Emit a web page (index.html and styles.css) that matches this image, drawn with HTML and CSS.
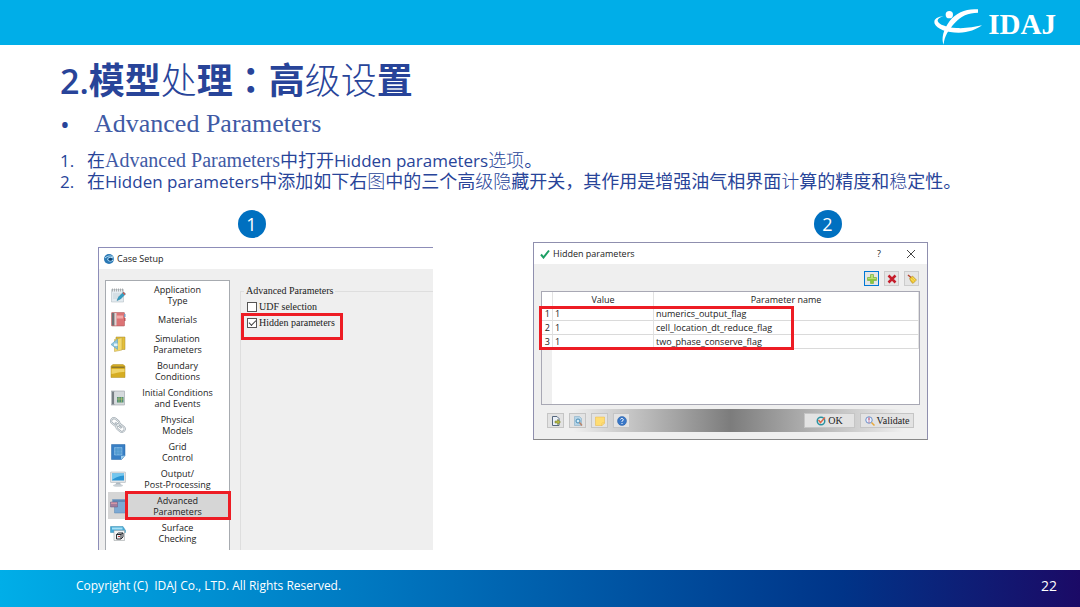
FILE: index.html
```html
<!DOCTYPE html>
<html lang="zh-CN">
<head>
<meta charset="utf-8">
<meta name="viewport" content="width=device-width, initial-scale=1">
<title>2.模型处理：高级设置</title>
<link rel="stylesheet" href="styles.css">
</head>
<body class="slide">
<header class="topbar">
  <svg class="logo-mark" viewBox="99 24 144 111" aria-hidden="true"><g fill="#fff"><circle cx="145" cy="44" r="11"/><path d="M128 49C106 50 97 60 101 71C107 86 137 98 173 98C203 98 227 88 243 76C220 81 192 86 166 84C137 82 113 74 110 63C109 57 116 52 128 49Z"/><path d="M128 134C120 117 127 88 146 63C166 37 196 25 231 28L231 38C201 38 180 48 162 68C143 89 130 107 128 134Z"/></g></svg>
  <span class="logo-text">IDAJ</span>
</header>
<main class="content">
  <h1 class="title"><span class="title-num">2.</span>模型<span class="thin">处</span>理<span class="colon" lang="zh-TW">：</span>高<span class="thin">级设</span>置</h1>
  <p class="subtitle"><span class="dot">•</span><span class="song">Advanced Parameters</span></p>
  <ol class="steps">
    <li class="step"><span class="num">1.</span><span>在<span class="song">Advanced Parameters</span>中打开<span class="latin">Hidden parameters</span><span class="thin">选项</span>。</span></li>
    <li class="step"><span class="num">2.</span><span>在<span class="latin">Hidden parameters</span>中添加如下右<span class="thin">图</span>中的三个高<span class="thin">级隐</span>藏开关，其作用是增强油气相界面<span class="thin">计</span>算的精度和<span class="thin">稳</span>定性。</span></li>
  </ol>
  <div class="figures">
    <section class="figure figure-one">
      <span class="badge">1</span>
      <div class="setup">
        <div class="setup-title"><svg width="10" height="10" viewBox="0 0 20 20" aria-hidden="true"><circle cx="10" cy="10" r="10" fill="#2a78b5"/><path d="M2 8C8 3 14 3 18 6M19 8C11 5 7 8 7 11C8 15 14 15 19 12" fill="none" stroke="#b8e0f4" stroke-width="2"/><circle cx="13" cy="10.500" r="3" fill="#123e69"/></svg>Case Setup</div>
        <div class="setup-body">
          <nav class="menu">
            <button class="item"><svg viewBox="0 0 32 32"><path d="M3 5H27V30H3Z" fill="#e4ebf0" stroke="#a9b4bd"/><path d="M5 3V9M9 3V9M13 3V9M17 3V9M21 3V9M25 3V9" stroke="#999" stroke-width="1.500"/><path d="M6 14H22M6 18H18M6 22H14" stroke="#a8bac6"/><path d="M14 27L17 20L27 10L31 14L21 24Z" fill="#329fc5" stroke="#277b99"/><path d="M27 10L31 14L29 16L25 12Z" fill="#d6574b"/></svg><span>Application<br>Type</span></button>
            <button class="item short"><svg viewBox="0 0 32 32"><rect x="3" y="3" width="26" height="27" rx="1" fill="#dc7375" stroke="#a65254"/><path d="M4 4H9V29H4Z" fill="#707174"/><path d="M9 4H13V29H9Z" fill="#d8d8d8"/><path d="M13 9H26V15H13Z" fill="#f4aaa8"/><path d="M28 6H31V12H28Z" fill="#779bc0"/><path d="M28 14H31V20H28Z" fill="#bd565b"/></svg><span>Materials</span></button>
            <button class="item"><svg viewBox="0 0 32 32"><path d="M12 2H30V27H12Z" fill="#e4bf39" stroke="#a58a2c"/><path d="M9 7L24 3V28L9 31Z" fill="#f4d96c" stroke="#b69a38"/><path d="M15 6V27L2 17Z" fill="#8ec4dd" stroke="#4d99bd"/><path d="M8 15H15V20H8Z" fill="#e4f4f8"/></svg><span>Simulation<br>Parameters</span></button>
            <button class="item"><svg viewBox="0 0 32 32"><path d="M2 6L6 3H26L30 6V29H2Z" fill="#d6ad22" stroke="#ae8f25"/><path d="M3 7H29V10H3Z" fill="#8f792d"/><path d="M3 12H29V18C20 17 12 20 3 22Z" fill="#f0d467"/></svg><span>Boundary<br>Conditions</span></button>
            <button class="item"><svg viewBox="0 0 32 32"><rect x="3" y="2" width="26" height="28" fill="#d6dadd" stroke="#8b9197"/><path d="M4 3H9V29H4Z" fill="#777e84"/><path d="M9 4V28" stroke="#fff"/><rect x="14" y="14" width="13" height="11" fill="#518f76"/><path d="M14 18H27M18 14V25M23 14V25" stroke="#d4d16d"/></svg><span>Initial Conditions<br>and Events</span></button>
            <button class="item"><svg viewBox="0 0 32 32"><g fill="none" stroke="#929da6" stroke-width="4"><rect x="2" y="5" width="17" height="11" rx="5" transform="rotate(40 11 10)"/><rect x="13" y="17" width="17" height="11" rx="5" transform="rotate(40 22 22)"/><path d="M10 11L23 22"/></g><g fill="none" stroke="#e2e7e9" stroke-width="2"><rect x="2" y="5" width="17" height="11" rx="5" transform="rotate(40 11 10)"/><rect x="13" y="17" width="17" height="11" rx="5" transform="rotate(40 22 22)"/><path d="M10 11L23 22"/></g></svg><span>Physical<br>Models</span></button>
            <button class="item"><svg viewBox="0 0 32 32"><path d="M3 1H30V23L23 31H3Z" fill="#387fc5" stroke="#2365a5"/><path d="M9 7H24V22H9Z" fill="#5fa3d8" stroke="#a3cfec"/><path d="M13 7V22M20 7V22M9 12H24M9 18H24" stroke="#4b94cb"/><path d="M30 23L22 31V24Z" fill="#9ed0ed"/></svg><span>Grid<br>Control</span></button>
            <button class="item"><svg viewBox="0 0 32 32"><rect x="1" y="2" width="30" height="21" rx="1" fill="#e2e5e7" stroke="#a5adb3"/><path d="M4 5H28V19H4Z" fill="#2b95d4"/><path d="M4 5H28V9C17 10 12 13 4 18Z" fill="#73c7ef"/><path d="M13 23H20L22 28H10Z" fill="#aeb9c1"/><ellipse cx="16" cy="29" rx="10" ry="2.500" fill="#c9d0d5"/></svg><span>Output/<br>Post-Processing</span></button>
            <button class="item selected"><svg viewBox="0 0 32 32"><path d="M5 3H32V30H9V14H5Z" fill="#7ca9d4" stroke="#5b87b0"/><path d="M6 4H31V8H6Z" fill="#5f8ab8"/><path d="M1 8H15V18H1Z" fill="#a37c9c" stroke="#665b82"/><path d="M2 9H14V12H2Z" fill="#d297a7"/></svg><span>Advanced<br>Parameters</span></button>
            <button class="item"><svg viewBox="0 0 32 32"><path d="M1 3H26L31 11V15H1Z" fill="#45a9d7" stroke="#388dad"/><path d="M4 5H25V9H4Z" fill="#a9e1f5"/><path d="M8 11H29V31H8Z" fill="#f3f3f3" stroke="#919699"/><path d="M13 19L17 16H26V24L22 28H13Z" fill="#eee" stroke="#292d32" stroke-width="2"/><path d="M13 19H22V28M22 19L26 16" stroke="#292d32" fill="none" stroke-width="2"/><path d="M16 23H20" stroke="#bb3838" stroke-width="2"/></svg><span>Surface<br>Checking</span></button>
          </nav>
          <fieldset class="options">
            <legend>Advanced Parameters</legend>
            <label class="option"><input type="checkbox">UDF selection</label>
            <label class="option marked"><input type="checkbox" checked>Hidden parameters</label>
          </fieldset>
        </div>
      </div>
    </section>
    <section class="figure figure-two">
      <span class="badge">2</span>
      <div class="dialog">
        <div class="dialog-title"><svg width="10" height="10" viewBox="0 0 20 20" aria-hidden="true"><path d="M2 11L7 17L18 3" fill="none" stroke="#1c9f64" stroke-width="4"/></svg><span class="dialog-name">Hidden parameters</span><button class="window-button" aria-label="Help">?</button><button class="window-button" aria-label="Close"><svg width="8" height="8" viewBox="0 0 8 8"><path d="M0 0L8 8M8 0L0 8" stroke="#444"/></svg></button></div>
        <div class="tools">
          <button class="tool active" aria-label="Add"><svg viewBox="0 0 20 20"><path d="M7 1H13V7H19V13H13V19H7V13H1V7H7Z" fill="#8cc83d" stroke="#65a52b"/><path d="M8 2H12V8H18V10H2V8H8Z" fill="#b9df73"/></svg></button>
          <button class="tool" aria-label="Delete"><svg viewBox="0 0 20 20"><path d="M3 3L17 17M17 3L3 17" stroke="#c51d2b" stroke-width="5"/></svg></button>
          <button class="tool" aria-label="Clear"><svg viewBox="0 0 20 20"><path d="M2 2L9 8" stroke="#b6452f" stroke-width="3"/><path d="M5 9L11 4L19 12L12 19Q7 16 5 9Z" fill="#efc62f" stroke="#a58026"/><path d="M8 10L14 15M11 7L17 13" stroke="#fff09a"/></svg></button>
        </div>
        <div class="table-box">
          <table class="params">
            <thead><tr><th class="index"></th><th class="value">Value</th><th>Parameter name</th></tr></thead>
            <tbody>
              <tr><td class="index">1</td><td>1</td><td>numerics_output_flag</td></tr>
              <tr><td class="index">2</td><td>1</td><td>cell_location_dt_reduce_flag</td></tr>
              <tr><td class="index">3</td><td>1</td><td>two_phase_conserve_flag</td></tr>
            </tbody>
          </table>
        </div>
        <div class="actions">
          <button class="action" aria-label="Export"><svg viewBox="0 0 20 20"><path d="M3 1H12L16 5V19H3Z" fill="#eaf0f8" stroke="#55677d" stroke-width="2"/><path d="M8 10H13V7L19 12L13 17V14H8Z" fill="#b6b942" stroke="#6b752d"/></svg></button>
          <button class="action" aria-label="Preview"><svg viewBox="0 0 20 20"><path d="M3 1H13L17 5V19H3Z" fill="#b7d4e6" stroke="#7ba7c3"/><circle cx="10" cy="10" r="4" fill="#d5edf8" stroke="#468cb7" stroke-width="2"/><path d="M13 13L18 19" stroke="#ba8469" stroke-width="3"/></svg></button>
          <button class="action" aria-label="Note"><svg viewBox="0 0 20 20"><path d="M1 2H19V14L14 19H1Z" fill="#ffdd73" stroke="#e8b744"/><path d="M19 14H14V19Z" fill="#fff0a8" stroke="#e8b744"/></svg></button>
          <button class="action" aria-label="Help"><svg viewBox="0 0 20 20"><circle cx="10" cy="10" r="9" fill="#3977c7" stroke="#285fa5"/><path d="M7 7Q8 4 11 5Q15 7 10 11V12M10 14V16" fill="none" stroke="#fff" stroke-width="2"/></svg></button>
          <button class="action ok"><svg viewBox="0 0 20 20"><circle cx="10" cy="10" r="7.500" fill="#e7f1ee" stroke="#2a91a0" stroke-width="3"/><path d="M5 8L9 13L18 3" fill="none" stroke="#dd6548" stroke-width="3"/></svg>OK</button>
          <button class="action validate"><svg viewBox="0 0 20 20"><circle cx="8" cy="8" r="6.500" fill="#eaf1ff" stroke="#6d91c9" stroke-width="2"/><path d="M8 3V9M8 11V13" stroke="#b92e4b" stroke-width="2"/><path d="M13 13L19 19" stroke="#e6a83b" stroke-width="3"/></svg>Validate</button>
        </div>
      </div>
    </section>
  </div>
</main>
<footer class="footer"><span>Copyright (C)&nbsp; IDAJ Co., LTD. All Rights Reserved.</span><span class="page">22</span></footer>
</body>
</html>
```

FILE: styles.css
```css
*, *::before, *::after { box-sizing: border-box; }
button { font: inherit; color: inherit; padding: 0; border: 0; background: none; }
svg { display: block; flex: none; }
.slide { margin: 0; min-height: 100vh; display: flex; flex-direction: column; background: #fff; color: #284499; font-family: "Open Sans", "Noto Sans CJK SC", sans-serif; }
.topbar { height: 45px; flex: none; display: flex; justify-content: flex-end; align-items: flex-end; gap: 6px; padding-right: 24px; background: #00aee8; }
.logo-mark { width: 48px; height: 37px; }
.logo-text { font: bold 29px/32px "Liberation Serif", serif; color: #fff; padding-bottom: 5px; }
.content { flex: 1; }
.title { margin: 0; padding: 9px 60px 0; font-size: 36px; line-height: 48px; font-weight: 700; font-family: "Noto Sans CJK SC", sans-serif; }
.title-num { font-family: "Open Sans", sans-serif; font-size: 34px; font-weight: 600; }
.colon { font-family: "Noto Sans CJK TC", sans-serif; }
.thin { font-weight: 300; }
.song { font-family: "Liberation Serif", serif; color: #405aa5; }
.subtitle { margin: 0; padding: 0 60px; display: flex; font-size: 26px; line-height: 38px; }
.dot { width: 34px; }
.steps { list-style: none; margin: 0; padding: 7px 60px 0; font-size: 18px; line-height: 21px; }
.step { display: flex; }
.step .song { font-size: 20px; line-height: 20px; }
.num { width: 27px; flex: none; font-size: 17px; }
.latin { font-size: 17px; }
.figures { display: grid; grid-template-columns: 335fr 395fr; column-gap: 100px; align-items: start; padding: 18px 152px 0 98px; }
.figure { display: flex; flex-direction: column; align-items: center; gap: 4px; }
.figure-one { gap: 9px; }
.figure-one .badge { margin-right: 28px; }
.figure-two .badge { margin-left: 194px; }
.badge { width: 28px; height: 28px; border-radius: 50%; background: #0070c0; color: #fff; font-size: 18px; line-height: 28px; text-align: center; }
.setup, .dialog { width: 100%; color: #222; font-family: "Open Sans", sans-serif; font-size: 9px; background: #efefef; }
.setup { border-top: 1px solid #8d8db8; border-left: 1px solid #8d8db8; }
.setup-title { height: 21px; display: flex; align-items: center; gap: 3px; padding-left: 5px; background: #fff; }
.setup-body { display: flex; gap: 10px; padding: 11px 0 0 6px; }
.menu { width: 125px; flex: none; border: 1px solid #a7abb0; border-bottom: 0; background: #fff; padding: 0 0 4px 2px; }
.item { width: 100%; height: 27px; display: flex; align-items: center; line-height: 11px; text-align: center; position: relative; }
.item svg { width: 16px; height: 18px; margin-left: 2px; }
.item span { flex: 1; }
.item.short { height: 22px; }
.item.selected { background: #d6d6d6; }
.item.selected::after { content: ""; position: absolute; inset: -1px -2px -1px 17px; border: 3px solid #ed1c24; }
.options { flex: 1; min-width: 0; margin: 4px 0 0; padding: 1px 0 0 6px; border: 1px solid #dedede; border-right: 0; border-bottom: 0; font: 10px/14px "Liberation Serif", serif; }
.options legend { padding: 0 2px; margin-left: -3px; line-height: 14px; }
.option { width: 96px; height: 16px; display: flex; align-items: center; gap: 2px; position: relative; }
.option input { appearance: none; width: 10px; height: 10px; margin: 0; border: 1px solid #555; background: #fff; flex: none; }
.option.marked::before { content: ""; position: absolute; left: 2px; top: 5px; width: 7px; height: 4px; border-left: 1px solid #444; border-bottom: 1px solid #444; transform: rotate(-45deg); z-index: 1; }
.option.marked::after { content: ""; position: absolute; left: -6px; top: -2px; right: 0; height: 27px; border: 3px solid #ed1c24; }
.dialog { border: 1px solid #8f8fae; border-bottom-color: #888; }
.dialog-title { height: 21px; display: flex; align-items: center; background: #fff; padding: 0 6px; gap: 3px; }
.dialog-name { flex: 1; }
.window-button { width: 20px; height: 20px; display: grid; place-items: center; margin-left: 9px; }
.tools { display: flex; justify-content: flex-end; gap: 5px; padding: 7px 8px 5px; }
.tool { width: 15px; height: 15px; border: 1px solid #ccc; background: #e5e5e5; display: grid; place-items: center; }
.tool.active { border-color: #0078d7; }
.tool svg { width: 10px; height: 10px; }
.table-box { position: relative; height: 114px; margin: 0 7px; border: 1px solid #a8a8b4; background: linear-gradient(90deg, #efefef 10px, #fff 10px); }
.table-box::after { content: ""; position: absolute; left: -3px; top: 14px; width: 255px; height: 44px; border: 3px solid #ed1c24; }
.params { width: 100%; border-collapse: separate; border-spacing: 0; table-layout: fixed; line-height: 13px; background: #fff; }
.params th { height: 15px; padding: 0; font-weight: 400; border-right: 1px solid #e2e2e2; }
.params td { height: 14px; padding: 0 2px; border-bottom: 1px solid #dadada; border-right: 1px solid #e2e2e2; }
.params .index { width: 11px; text-align: right; }
.params .value { width: 101px; }
.actions { display: flex; align-items: center; gap: 5px; height: 23px; margin: 4px 0 7px; padding: 0 13px; background: linear-gradient(90deg, #efefef 10%, #7c7c7c 50%, #efefef 94%); font: 10px/13px "Liberation Serif", serif; }
.action { width: 17px; height: 15px; display: flex; align-items: center; justify-content: center; gap: 2px; border: 1px solid #c5c5c5; background: #e3e3e3; }
.action svg { width: 10px; height: 10px; }
.ok { width: 51px; margin-left: auto; }
.validate { width: 54px; }
.footer { height: 37px; flex: none; display: flex; align-items: center; justify-content: space-between; padding: 0 23px 6px 76px; background: linear-gradient(90deg, #00aee8 0%, #0072bc 38%, #003488 78%, #1b0a66 100%); color: #fff; font-size: 12px; }
.page { font-size: 14px; }
```
